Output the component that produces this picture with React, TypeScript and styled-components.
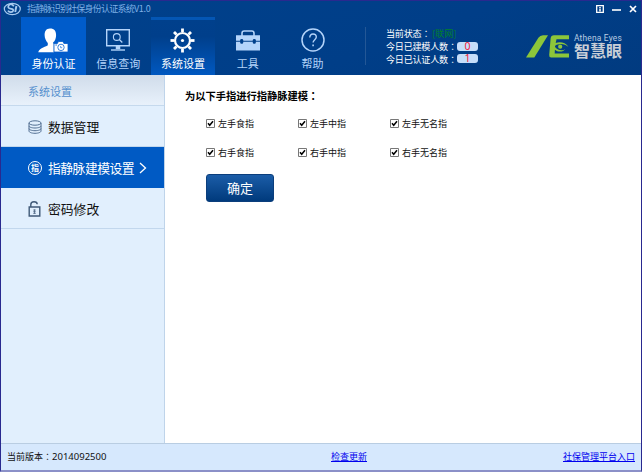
import React, { useState } from "react";
import styled, { createGlobalStyle, css } from "styled-components";

const GlobalStyle = createGlobalStyle`
  *, *::before, *::after { box-sizing: border-box; }
  html, body { margin: 0; padding: 0; overflow: hidden; }
  body, button { font-family: "Noto Sans CJK SC", "Open Sans", sans-serif; }
  svg { display: block; }
`;

const Window = styled.div`
  width: 642px;
  height: 472px;
  display: flex;
  flex-direction: column;
  background: #fff;
  border: 1px solid #29298f;
  border-bottom: 2px solid #8b90c8;
`;

const Header = styled.header`
  height: 74px;
  flex: none;
  display: flex;
  flex-direction: column;
  background: linear-gradient(160deg, #00418c 0%, #003e88 60%, #013b80 100%);
`;

const TitleBar = styled.div`
  height: 16px;
  display: flex;
  align-items: center;
  padding: 0 4px 0 2px;
`;

const TitleText = styled.span<{ $spacing: number }>`
  font-size: 9px;
  line-height: 14px;
  letter-spacing: ${(p) => p.$spacing}px;
  color: #7fb0e6;
  white-space: nowrap;
`;

const AppLogo = styled.svg`
  margin-right: 5px;
`;

const WindowControls = styled.div`
  margin-left: auto;
  display: flex;
  align-items: center;
  gap: 8px;
`;

const HeaderBody = styled.div`
  height: 58px;
  display: flex;
`;

const Nav = styled.nav`
  display: flex;
  margin-left: 20px;
`;

const NavTile = styled.button<{ $kind: "bright" | "active" | "plain" }>`
  width: 64.8px;
  height: 58px;
  padding: 9px 0 0;
  border: 0;
  display: flex;
  flex-direction: column;
  align-items: center;
  background: transparent;
  color: #b4d4fa;
  font-size: 11px;
  line-height: 18px;
  ${(p) => p.$kind === "bright" && css`
    background: #005ccb;
    color: #fff;
  `}
  ${(p) => p.$kind === "active" && css`
    background: linear-gradient(#00408c, #003f8b 30%, #0058c0);
    border-top: 3px solid #0456b4;
    padding-top: 6px;
    color: #fff;
  `}
`;

const NavIcon = styled.span`
  height: 28px;
  display: flex;
  align-items: center;
  justify-content: center;
`;

const Divider = styled.div`
  width: 1px;
  height: 38px;
  margin: 10px 20px 0;
  background: #235796;
`;

const Status = styled.div`
  display: flex;
  flex-direction: column;
  padding-top: 10px;
  font-size: 9.1px;
  color: #fff;
`;

const StatusRow = styled.div`
  height: 12.8px;
  display: flex;
  align-items: center;
  line-height: 12px;
  white-space: nowrap;
`;

const StatusLabel = styled.span<{ $width: number }>`
  width: ${(p) => p.$width}px;
  letter-spacing: -0.25px;
`;

/* The traditional face centres the full-width colon in its cell. */
const CentredColon = styled.span`
  font-family: "Noto Sans CJK TC", sans-serif;
`;

const Online = styled.span`
  color: #00802a;
`;

const Counter = styled.span`
  width: 21px;
  height: 9px;
  border-radius: 3px;
  background: #c5defa;
  color: #f0203a;
  font-family: "Noto Sans", sans-serif;
  font-size: 10.5px;
  line-height: 9px;
  text-align: center;
`;

const Brand = styled.div`
  margin-left: auto;
  padding: 16px 19px 0 0;
  display: flex;
  gap: 5px;
`;

const BrandMark = styled.svg`
  margin-top: 2px;
`;

const BrandText = styled.div`
  width: 48px;
  display: flex;
  flex-direction: column;
  white-space: nowrap;
`;

const BrandLatin = styled.span`
  font: 8.4px/10px Roboto, sans-serif;
  letter-spacing: 0.2px;
  color: #b9cde2;
`;

const BrandCjk = styled.span`
  font-size: 16px;
  font-weight: 700;
  line-height: 15px;
  color: #c8ced6;
`;

const Body = styled.div`
  flex: 1;
  min-height: 0;
  display: flex;
`;

const Sidebar = styled.aside`
  width: 164px;
  flex: none;
  background: #e1effd;
  border-right: 1px solid #bfd4ea;
`;

const SidebarTitle = styled.div`
  height: 31px;
  padding-left: 27px;
  border-bottom: 1px solid #c5d9ed;
  background: linear-gradient(#d0dcea, #e8f1fb);
  color: #5590ce;
  font-size: 11px;
  line-height: 32px;
`;

const MenuItem = styled.button<{ $selected?: boolean }>`
  width: 100%;
  height: 41px;
  display: flex;
  align-items: center;
  padding: 1px 0 0 27px;
  border: 0;
  border-bottom: 1px solid ${(p) => (p.$selected ? "#005ac4" : "#c2d7ed")};
  background: ${(p) => (p.$selected ? "#005ac4" : "#e1effd")};
  color: ${(p) => (p.$selected ? "#fff" : "#111")};
  font-size: 12.8px;
  line-height: 20px;
  letter-spacing: ${(p) => (p.$selected ? -0.5 : 0)}px;
  white-space: nowrap;
`;

const MenuIcon = styled.span`
  width: 20px;
  flex: none;
`;

const Chevron = styled.svg`
  margin-left: 5px;
`;

const Content = styled.main`
  flex: 1;
  padding: 12px 0 0 20px;
`;

const Heading = styled.h1`
  margin: 0;
  font-size: 10.3px;
  line-height: 18px;
  font-weight: 700;
  letter-spacing: -0.05px;
  color: #000;
`;

const FingerGrid = styled.div`
  display: grid;
  grid-template-columns: 92px 92px 92px;
  grid-auto-rows: 29px;
  margin: 4px 0 0 21px;
`;

const Finger = styled.label`
  display: flex;
  align-items: center;
  gap: 3px;
  font-size: 9px;
  line-height: 14px;
  color: #111;
  white-space: nowrap;
`;

const HiddenInput = styled.input`
  appearance: none;
  width: 0;
  height: 0;
  margin: 0 -3px 0 0;
`;

const Box = styled.svg`
  flex: none;
`;

const Confirm = styled.button`
  display: block;
  width: 68px;
  height: 28px;
  margin: 7px 0 0 21px;
  padding: 0;
  border: 1px solid #0b3e7c;
  border-radius: 3px;
  background: linear-gradient(#1b5da8, #003a7c);
  color: #fff;
  font-size: 13px;
  line-height: 26px;
`;

const Footer = styled.footer`
  height: 27px;
  flex: none;
  display: flex;
  align-items: center;
  padding: 0 6px;
  border-top: 1px solid #b9cde2;
  background: #d6e8fd;
  font-size: 9px;
  line-height: 14px;
  color: #111;
`;

const Version = styled.span`
  width: 324px;
  display: flex;
`;

const VersionNumber = styled.span`
  font-family: "Noto Sans", sans-serif;
  font-size: 9.5px;
`;

const FooterLink = styled.a<{ $end?: boolean }>`
  margin-left: ${(p) => (p.$end ? "auto" : 0)};
  color: #0000ee;
  text-decoration: underline;
`;

const UserIcon = () => (
  <svg width="31" height="25" viewBox="0 0 31 25" fill="#fff">
    <path d="M12 .5C8.1.5 6.6 3.4 6.6 7c0 3.4 1.6 6.3 3.2 7.9v2.4c-1.1 1.8-8 1.7-9.6 6.9h15.6V16c-.8-.6-.7-.8-.7-1.5 1.9-1.5 3-4.3 3-7.5 0-3.8-1.7-6.5-6.1-6.5z" />
    <path d="M16 15.5h3.4l1-2h4.5l1 2H30V24H16z" stroke="#005ccb" strokeWidth=".8" />
    <circle cx="23" cy="19.4" r="3.2" stroke="#3a83dc" />
    <path d="m22.6 18 .1 1.8 1.5-.2" fill="none" stroke="#3a83dc" strokeWidth=".8" />
    <path d="M17.4 17h1.5" stroke="#1b6cd0" />
  </svg>
);

const MonitorIcon = () => (
  <svg width="24" height="22" viewBox="0 0 24 22" fill="none" stroke="#b4d4fa">
    <path d="M.7.7h22.6v16H.7z" strokeWidth="1.4" />
    <circle cx="10.8" cy="8" r="3.4" strokeWidth="1.1" />
    <path d="m13.3 10.6 3 2.8" strokeWidth="1.3" />
    <path d="M12 17v3.2" strokeWidth="4.5" />
    <path d="M5 21h14" strokeWidth="1.4" />
  </svg>
);

const GearIcon = () => (
  <svg width="25" height="25" viewBox="-12.5 -12.5 25 25" fill="none" stroke="#fff">
    <circle r="7.5" strokeWidth="2.2" />
    {[0, 45, 90, 135, 180, 225, 270, 315].map((a) => (
      <path key={a} d="M0-8.5V-12" strokeWidth="2.8" transform={`rotate(${a})`} />
    ))}
    <circle r="1.6" fill="#fff" stroke="none" />
  </svg>
);

const ToolboxIcon = () => (
  <svg width="24" height="21" viewBox="0 0 24 21">
    <path d="M6 6V3.2Q6 1 8.2 1h7.6Q18 1 18 3.2V6" fill="none" stroke="#b4d4fa" strokeWidth="1.6" />
    <path d="M0 5.3h24v5.4H0zM0 11.7h24V20.5H0z" fill="#b4d4fa" />
    <rect x="4.2" y="9" width="3" height="4.7" rx="1.2" fill="#00408b" />
    <rect x="16.8" y="9" width="3" height="4.7" rx="1.2" fill="#00408b" />
  </svg>
);

const HelpIcon = () => (
  <svg width="24" height="24" viewBox="0 0 24 24" fill="none" stroke="#b4d4fa">
    <circle cx="12" cy="12" r="11" strokeWidth="1.5" />
    <path d="M8.8 9.5C8.8 7.4 10 6 12 6s3.3 1.3 3.3 3.1c0 2.6-3.2 2.7-3.2 5.5" strokeWidth="1.4" />
    <path d="M12.1 16.5v1.8" strokeWidth="1.6" />
  </svg>
);

const DatabaseIcon = () => (
  <svg width="14" height="14" viewBox="0 0 14 14" fill="none" stroke="#526f92">
    <ellipse cx="7" cy="3" rx="6" ry="2.2" />
    <path d="M1 3v8c0 1.3 2.6 2.3 6 2.3s6-1 6-2.3V3M1 5.9C1 7 3.6 8 7 8s6-1 6-2.1M1 8.6c0 1.1 2.6 2.1 6 2.1s6-1 6-2.1" />
  </svg>
);

const BadgeRing = styled.span`
  width: 14px;
  height: 14px;
  display: flex;
  align-items: center;
  justify-content: center;
  border: 1.4px solid #fff;
  border-radius: 50%;
  font-size: 8px;
  font-weight: 700;
  line-height: 10px;
  letter-spacing: 0;
`;

const LockIcon = () => (
  <svg width="13" height="16" viewBox="0 0 13 16" fill="none" stroke="#405a78">
    <path d="M1.2 6h10.6v9H1.2z" strokeWidth="1.4" />
    <path d="M2.8 6V3.8C2.8 1.8 4.1.8 6 .8s3.2.8 3.2 2.4" strokeWidth="1.4" />
    <path d="M6.5 8.4v4.2M5.2 9h2.6M5.2 12.4h2.6M5.2 10.7h2.6" strokeWidth=".7" />
  </svg>
);

const fingers = ["左手食指", "左手中指", "左手无名指", "右手食指", "右手中指", "右手无名指"];

const Colon = () => <CentredColon lang="zh-Hant">：</CentredColon>;

function FingerOption({ name }: { name: string }) {
  const [checked, setChecked] = useState(true);
  return (
    <Finger>
      <HiddenInput type="checkbox" checked={checked} onChange={() => setChecked(!checked)} />
      <Box width="9" height="9" viewBox="0 0 9 9">
        <path d="M.5.5h8v8h-8z" fill="#fff" stroke="#777" />
        {checked && <path d="M2 4.2 3.7 6.3 7 2.2" fill="none" stroke="#000" strokeWidth="1.5" />}
      </Box>
      {name}
    </Finger>
  );
}

export default function App() {
  return (
    <>
      <GlobalStyle />
      <Window>
        <Header>
          <TitleBar>
            <AppLogo width="19" height="14" viewBox="0 0 19 14" fill="none" stroke="#a8caef">
              <ellipse cx="9.3" cy="7" rx="8" ry="5.6" strokeWidth="1.2" />
              <path d="M10.8 4.2C8-.2 3.4 4 6 6.2c1.5 1.2 4.5.3 4.2 2.3-.4 2.1-4.1 2.2-5.2.1" strokeWidth="1.7" />
              <path d="m13.4 4-1.2 6" strokeWidth="1.9" />
            </AppLogo>
            <TitleText $spacing={-0.78}>指静脉识别社保身份认证系统</TitleText>
            <TitleText $spacing={-0.3}>V1.0</TitleText>
            <WindowControls>
              <svg width="8" height="8" viewBox="0 0 8 8" fill="none" stroke="#fff">
                <path d="M.7.7h6.6v6.6H.7z" strokeWidth="1.3" />
                <path d="M4 2v1M4 3.5v3" strokeWidth="1.5" />
              </svg>
              <svg width="9" height="8" viewBox="0 0 9 8" stroke="#fff">
                <path d="M0 5h9" strokeWidth="1.6" />
              </svg>
              <svg width="8" height="8" viewBox="0 0 8 8" stroke="#fff">
                <path d="m1 1 6 6M7 1 1 7" strokeWidth="1.7" />
              </svg>
            </WindowControls>
          </TitleBar>
          <HeaderBody>
            <Nav>
              <NavTile $kind="bright"><NavIcon><UserIcon /></NavIcon>身份认证</NavTile>
              <NavTile $kind="plain"><NavIcon><MonitorIcon /></NavIcon>信息查询</NavTile>
              <NavTile $kind="active"><NavIcon><GearIcon /></NavIcon>系统设置</NavTile>
              <NavTile $kind="plain"><NavIcon><ToolboxIcon /></NavIcon>工具</NavTile>
              <NavTile $kind="plain"><NavIcon><HelpIcon /></NavIcon>帮助</NavTile>
            </Nav>
            <Divider />
            <Status>
              <StatusRow><StatusLabel $width={46}>当前状态<Colon /></StatusLabel><Online>[联网]</Online></StatusRow>
              <StatusRow><StatusLabel $width={71}>今日已建模人数<Colon /></StatusLabel><Counter>0</Counter></StatusRow>
              <StatusRow><StatusLabel $width={71}>今日已认证人数<Colon /></StatusLabel><Counter>1</Counter></StatusRow>
            </Status>
            <Brand>
              <BrandMark width="43" height="23" viewBox="0 0 43 23">
                <path d="M0 22.5 12.4 2.8Q14 .3 17 .3h5L8.3 22.5z" fill="#8cc63a" />
                <path d="M28 .3H43v4H30.5l-.8 3.6c4-1.4 9.6-1 12.8 4.2-2.6-2.2-5.6-3.4-9.3-2.9-2 .2-3.4.8-4.1 1.7l-.1 1.2c3.5 3.9 7.8 4 10.5 1.6-2.5 3.8-7.6 3.5-10.6 1l-.2 3.8H43v4H25.2q-2.2 0-2-2.5L24.6 3.5Q25 .3 28 .3z" fill="#8cc63a" />
                <circle cx="34.2" cy="11.7" r="2.1" fill="#8cc63a" />
              </BrandMark>
              <BrandText>
                <BrandLatin>Athena Eyes</BrandLatin>
                <BrandCjk>智慧眼</BrandCjk>
              </BrandText>
            </Brand>
          </HeaderBody>
        </Header>
        <Body>
          <Sidebar>
            <SidebarTitle>系统设置</SidebarTitle>
            <MenuItem><MenuIcon><DatabaseIcon /></MenuIcon>数据管理</MenuItem>
            <MenuItem $selected>
              <MenuIcon><BadgeRing>指</BadgeRing></MenuIcon>指静脉建模设置
              <Chevron width="8" height="12" viewBox="0 0 8 12" fill="none" stroke="#fff">
                <path d="m1 1 5.5 5L1 11" strokeWidth="1.3" />
              </Chevron>
            </MenuItem>
            <MenuItem><MenuIcon><LockIcon /></MenuIcon>密码修改</MenuItem>
          </Sidebar>
          <Content>
            <Heading>为以下手指进行指静脉建模<Colon /></Heading>
            <FingerGrid>{fingers.map((f) => <FingerOption key={f} name={f} />)}</FingerGrid>
            <Confirm>确定</Confirm>
          </Content>
        </Body>
        <Footer>
          <Version>当前版本<Colon /><VersionNumber>2014092500</VersionNumber></Version>
          <FooterLink href="#">检查更新</FooterLink>
          <FooterLink href="#" $end>社保管理平台入口</FooterLink>
        </Footer>
      </Window>
    </>
  );
}
